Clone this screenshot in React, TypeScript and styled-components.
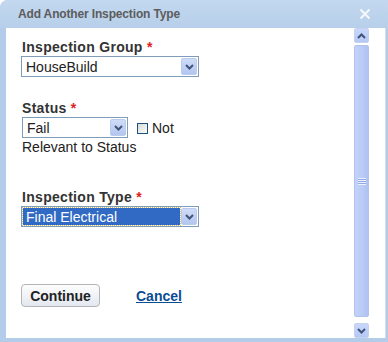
import styled, { createGlobalStyle } from "styled-components";

const GlobalStyle = createGlobalStyle`
    body {
        margin: 0;
        font-family: "Liberation Sans", Arial, sans-serif;
    }
`;

const Chevron = ({ up }: { up?: boolean }) => (
    <svg width="9" height="6" viewBox="0 0 9 6">
        <path
            d={up ? "M1 5 L4.5 1.5 L8 5" : "M1 1 L4.5 4.5 L8 1"}
            fill="none"
            stroke="#3f5378"
            strokeWidth="2"
        />
    </svg>
);

const Select = ({
    value,
    width,
    selected,
}: {
    value: string;
    width: number;
    selected?: boolean;
}) => (
    <SelectBox $width={width}>
        <SelectValue $selected={selected}>{value}</SelectValue>
        <ArrowButton>
            <Chevron />
        </ArrowButton>
    </SelectBox>
);

const App = () => {
    return (
        <>
            <GlobalStyle />
            <Dialog>
                <TitleBar>
                    <Title>Add Another Inspection Type</Title>
                    <Close>
                        <svg width="12" height="12" viewBox="0 0 12 12">
                            <path
                                d="M1.5 1.5 L10.5 10.5 M10.5 1.5 L1.5 10.5"
                                stroke="#f4f8fc"
                                strokeWidth="2"
                            />
                        </svg>
                    </Close>
                </TitleBar>
                <Body>
                    <Content>
                        <Field $top={12}>
                            <Label>
                                Inspection Group <Req>*</Req>
                            </Label>
                            <Select value="HouseBuild" width={178} />
                        </Field>
                        <Field $top={24}>
                            <Label>
                                Status <Req>*</Req>
                            </Label>
                            <StatusRow>
                                <Select value="Fail" width={106} />
                                <Check />
                                <span>Not</span>
                            </StatusRow>
                            <Plain>Relevant to Status</Plain>
                        </Field>
                        <Field $top={35}>
                            <Label>
                                Inspection Type <Req>*</Req>
                            </Label>
                            <Select value="Final Electrical" width={178} selected />
                        </Field>
                        <Actions>
                            <Button>Continue</Button>
                            <CancelLink href="#">Cancel</CancelLink>
                        </Actions>
                    </Content>
                    <Scrollbar>
                        <ScrollButton>
                            <Chevron up />
                        </ScrollButton>
                        <Thumb>
                            <Grip />
                        </Thumb>
                        <ScrollButton>
                            <Chevron />
                        </ScrollButton>
                    </Scrollbar>
                </Body>
            </Dialog>
        </>
    );
};

const Dialog = styled.div`
    width: 388px;
    height: 342px;
    display: flex;
    flex-direction: column;
    background: #b2cce9;
    border-top-left-radius: 8px;
    overflow: hidden;
`;

const TitleBar = styled.div`
    height: 28px;
    display: flex;
    align-items: center;
    justify-content: space-between;
    padding: 0 18px 0 18px;
    background: linear-gradient(#c3d8ef, #b7cfea);
`;

const Title = styled.span`
    font-size: 12px;
    font-weight: bold;
    color: #5c5c5c;
    letter-spacing: -0.15px;
`;

const Close = styled.span`
    display: flex;
    margin-right: -1px;
`;

const Body = styled.div`
    flex: 1;
    display: flex;
    margin-left: 6px;
    margin-right: 2px;
    margin-bottom: 4px;
    background: #fff;
    border-right: 1px solid #d7dde6;
`;

const Content = styled.div`
    flex: 1;
    padding-left: 15px;
`;

const Field = styled.div<{ $top: number }>`
    margin-top: ${({ $top }) => $top}px;
`;

const Label = styled.div`
    font-size: 14px;
    line-height: 15px;
    font-weight: bold;
    letter-spacing: 0.3px;
    color: #333;
    margin-bottom: 1px;
    padding-left: 1px;
`;

const Req = styled.span`
    color: #e02020;
`;

const SelectBox = styled.div<{ $width: number }>`
    width: ${({ $width }) => $width}px;
    height: 21px;
    box-sizing: border-box;
    border: 1px solid #7f9db9;
    display: flex;
    align-items: center;
    padding: 1px;
    background: #fff;
`;

const SelectValue = styled.div<{ $selected?: boolean }>`
    flex: 1;
    align-self: stretch;
    display: flex;
    align-items: center;
    font-size: 14px;
    padding-left: 3px;
    margin-right: 1px;
    color: ${({ $selected }) => ($selected ? "#fff" : "#222")};
    background: ${({ $selected }) => ($selected ? "#316ac5" : "transparent")};
    outline: ${({ $selected }) => ($selected ? "1px dotted #d9b760" : "none")};
`;

const ArrowButton = styled.div`
    width: 16px;
    height: 17px;
    box-sizing: border-box;
    border: 1px solid #b9cbee;
    border-radius: 2px;
    background: linear-gradient(#cfdcf8, #b3c6f0);
    display: flex;
    align-items: center;
    justify-content: center;
`;

const StatusRow = styled.div`
    display: flex;
    align-items: center;
    font-size: 14px;
    color: #222;
    margin-left: 1px;
`;

const Check = styled.span`
    width: 11px;
    height: 11px;
    box-sizing: border-box;
    border: 1px solid #1c5180;
    background: linear-gradient(135deg, #dcdcd6, #fbfbf9);
    margin: 2px 4px 0 9px;
`;

const Plain = styled.div`
    font-size: 14px;
    line-height: 15px;
    color: #222;
    margin-top: 2px;
    padding-left: 1px;
`;

const Actions = styled.div`
    margin-top: 57px;
    display: flex;
    align-items: center;
    gap: 36px;
`;

const Button = styled.button`
    width: 79px;
    height: 23px;
    border: 1px solid #b5b5b5;
    border-radius: 4px;
    background: linear-gradient(#fdfdfd, #e3e8f0);
    font-family: "Liberation Sans", Arial, sans-serif;
    font-size: 14px;
    font-weight: bold;
    color: #222;
    padding: 0;
`;

const CancelLink = styled.a`
    font-size: 14px;
    font-weight: bold;
    color: #0a4d94;
`;

const Scrollbar = styled.div`
    width: 15px;
    margin-right: 16px;
    display: flex;
    flex-direction: column;
    gap: 2px;
`;

const ScrollButton = styled.div`
    height: 15px;
    box-sizing: border-box;
    border: 1px solid #c6d2ec;
    border-radius: 2px;
    background: linear-gradient(#c9d7fb, #b5c8f5);
    display: flex;
    align-items: center;
    justify-content: center;
`;

const Thumb = styled.div`
    flex: 1;
    margin-bottom: 4px;
    box-sizing: border-box;
    border: 1px solid #b2c3ea;
    border-radius: 2px;
    background: linear-gradient(90deg, #c3d2fa, #b8cbf6 60%, #aec2f2);
    display: flex;
    align-items: center;
    justify-content: center;
`;

const Grip = styled.div`
    width: 8px;
    height: 7px;
    background: repeating-linear-gradient(#eef3ff 0 1px, #8ea8e4 1px 2px);
`;

export default App;
